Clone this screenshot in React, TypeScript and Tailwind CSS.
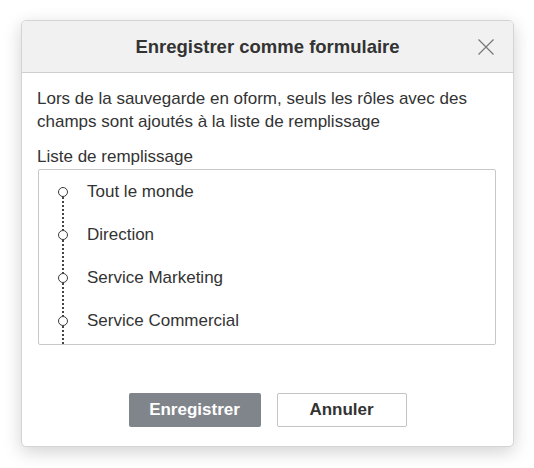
const roles = ['Tout le monde', 'Direction', 'Service Marketing', 'Service Commercial']

function Dots({ hidden }: { hidden?: boolean }) {
  return (
    <div
      className={`w-[2px] flex-1 ${
        hidden ? '' : 'bg-[repeating-linear-gradient(to_bottom,#444_0px,#444_2px,transparent_2px,transparent_4px)]'
      }`}
    />
  )
}

export default function App() {
  return (
    <div
      className="w-[534px] h-[468px] bg-white pt-[20px] pl-[21px] text-[#333]"
      style={{ fontFamily: '"Liberation Sans", Arial, sans-serif' }}
    >
      <div className="w-[493px] h-[427px] flex flex-col rounded-[5px] border border-[#d4d4d4] bg-white overflow-hidden shadow-[0_5px_18px_rgba(0,0,0,0.18)]">
        <div className="relative h-[52px] shrink-0 bg-[#f1f1f1] border-b border-[#cfcfcf] flex items-center justify-center">
          <span className="text-[18.5px] font-bold">Enregistrer comme formulaire</span>
          <button className="absolute right-[19px] top-[18px] w-[16px] h-[16px]">
            <svg viewBox="0 0 16 16" width="16" height="16">
              <path d="M0.5 0.5 L15.5 15.5 M15.5 0.5 L0.5 15.5" stroke="#777" strokeWidth="1.2" fill="none" />
            </svg>
          </button>
        </div>

        <div className="flex-1 px-[15px] pt-[14px]">
          <p className="text-[17px] leading-[23px]">
            Lors de la sauvegarde en oform, seuls les rôles avec des champs sont ajoutés à la liste de remplissage
          </p>
          <div className="mt-[13px] text-[17px] leading-[22px]">Liste de remplissage</div>
          <div className="mt-[1px] ml-[1px] w-[458px] h-[176px] border border-[#c8c8c8] rounded-[2px] flex flex-col">
            {roles.map((role, i) => (
              <div key={role} className="h-[43px] flex items-stretch">
                <div className="w-[48px] flex flex-col items-center">
                  <Dots hidden={i === 0} />
                  <div className="w-[10px] h-[10px] rounded-full border-[1.5px] border-[#3a3a3a] shrink-0" />
                  <Dots />
                </div>
                <div className="flex items-center text-[17px]">{role}</div>
              </div>
            ))}
            <div className="w-[48px] flex-1 flex flex-col items-center">
              <Dots />
            </div>
          </div>
        </div>

        <div className="flex justify-center gap-[16px] pb-[19px] shrink-0">
          <button className="w-[132px] h-[34px] rounded-[2px] bg-[#80858b] text-white text-[17px] font-bold">
            Enregistrer
          </button>
          <button className="w-[130px] h-[34px] rounded-[2px] border border-[#c4c4c4] bg-white text-[#333] text-[17px] font-bold">
            Annuler
          </button>
        </div>
      </div>
    </div>
  )
}
